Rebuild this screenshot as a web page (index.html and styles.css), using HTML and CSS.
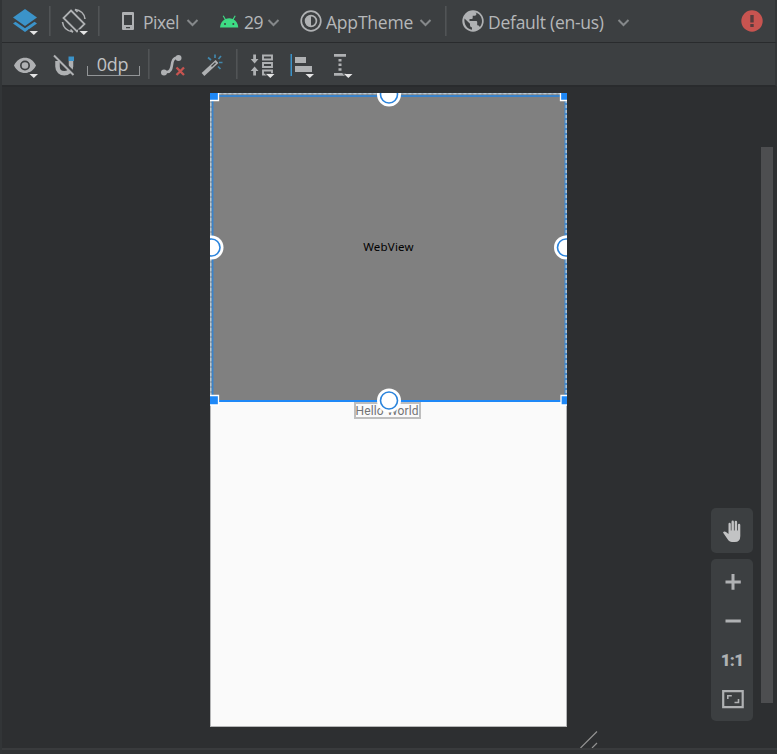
FILE: index.html
```html
<!DOCTYPE html>
<html lang="en">
<head>
<meta charset="utf-8">
<title>Layout Editor</title>
<link rel="stylesheet" href="styles.css">
</head>
<body>
<div class="editor">
  <div class="toolbar toolbar-top">
    <svg class="icon" width="47" height="42" viewBox="2 0 47 42">
      <path fill="#3b93c9" d="M25 9l12 8.500-12 8.500-12-8.500z"/>
      <path fill="#3b93c9" d="M13 23.500l2.500-1.800 9.500 6.600 9.500-6.600 2.500 1.800-12 8.500z"/>
      <path fill="#3c3f41" d="M28 29.500h12v6H30z"/><path fill="#e4e4e4" d="M29.500 31h8.500l-4.200 4z"/>
    </svg>
    <span class="separator"></span>
    <svg class="icon" width="47" height="42" viewBox="51 0 47 42">
      <g fill="none" stroke="#afb1b3" stroke-width="1.600">
        <path d="M71 10.500L84.500 24 77 31.500 63.500 18z" stroke-width="1.800"/>
        <path d="M75 9.500c5.500.7 9.500 4.500 10 9.500M62.500 22c.7 5.300 4.500 9 10.500 10"/>
        <path d="M75 9.500l2.500 2.500M73 32l-2.500-2.500"/>
      </g>
      <path fill="#3c3f41" d="M78 29.500h12v6H78z"/><path fill="#e4e4e4" d="M79.500 31H88l-4.200 4z"/>
    </svg>
    <span class="separator"></span>
    <svg class="icon" width="43" height="42" viewBox="100 0 43 42">
      <path fill="#afb1b3" fill-rule="evenodd" d="M123 12h10q1 0 1 1v16q0 1-1 1h-10q-1 0-1-1V13q0-1 1-1zm1 3v10h8V15zm2 12v1.300h4V27z"/>
    </svg>
    <span class="label pixel">Pixel</span>
    <svg class="icon chevron" width="16" height="42" viewBox="184 0 16 42"><path d="M187.500 20l5 5 5-5"/></svg>
    <svg class="icon" width="44" height="42" viewBox="200 0 44 42">
      <path fill="#3ddc84" d="M220 27.500c.3-4 2.300-6.600 4.700-8l-2-3.500 1-.6 2 3.500c2.300-.8 4.700-.8 7 0l2-3.500 1 .6-2 3.500c2.400 1.400 4.300 4 4.600 8z"/>
      <circle cx="225" cy="24" r="1" fill="#3c3f41"/><circle cx="233.300" cy="24" r="1" fill="#3c3f41"/>
    </svg>
    <span class="label api">29</span>
    <svg class="icon chevron" width="16" height="42" viewBox="265 0 16 42"><path d="M268.500 20l5 5 5-5"/></svg>
    <svg class="icon" width="45" height="42" viewBox="281 0 45 42">
      <g fill="none" stroke="#afb1b3" stroke-width="1.700"><circle cx="311" cy="21" r="9.800"/><circle cx="311" cy="21" r="5.400"/></g>
      <path fill="#afb1b3" d="M311 15.500a5.500 5.500 0 0 0 0 11z"/>
    </svg>
    <span class="label theme">AppTheme</span>
    <svg class="icon chevron" width="28" height="42" viewBox="417 0 28 42"><path d="M420.500 20l5 5 5-5"/></svg>
    <span class="separator"></span>
    <svg class="icon" width="41" height="42" viewBox="447 0 41 42">
      <circle cx="473" cy="21" r="10.700" fill="#afb1b3"/>
      <path fill="#3c3f41" d="M464.500 18.500l5.500 5.200v1.800q0 1.500 2 2v2.200c-5-.5-8.300-5.500-7.500-11.200zM475.500 12.500c4 1 6.500 4.500 6.500 8.500 0 2.300-.8 4.500-2.200 6-.5-1.200-1.300-1.700-2.600-1.700v-3.200q0-1.100-1-1.100h-6.700v-2h2.200q1 0 1-1v-2.200h2q1.800 0 1.800-2z"/>
    </svg>
    <span class="label locale">Default (en-us)</span>
    <svg class="icon chevron" width="24" height="42" viewBox="611 0 24 42"><path d="M618.500 20l5 5 5-5"/></svg>
    <svg class="icon error" width="24" height="42" viewBox="740 0 24 42">
      <circle cx="752" cy="21" r="10.700" fill="#c75450"/>
      <path fill="#573c3d" d="M750.300 15h3.400v7.500h-3.400zM750.300 24h3.400v3h-3.400z"/>
    </svg>
  </div>
  <div class="toolbar toolbar-bottom">
    <svg class="icon" width="84" height="42" viewBox="2 43 84 42">
      <path fill="#afb1b3" fill-rule="evenodd" d="M14 65.500c4.500-10.500 17.500-10.500 22 0-4.500 10-17.500 10-22 0zm11-5a5 5 0 1 0 0 10 5 5 0 0 0 0-10z"/>
      <circle cx="25" cy="65.500" r="3.300" fill="#afb1b3"/>
      <path fill="#3c3f41" d="M28 72.500h12v6H28z"/><path fill="#e4e4e4" d="M29.500 74h8.500l-4.200 4z"/>
      <path fill="none" stroke="#afb1b3" stroke-width="4.500" d="M57.500 61v5.500c0 9 13.500 9 13.500 0V61"/>
      <path fill="#3b93c9" d="M68.500 56.500H74V61h-5.500z"/>
      <path stroke="#3c3f41" stroke-width="3" d="M55.500 54.500l20 20"/>
      <path stroke="#afb1b3" stroke-width="2" d="M54 55.500l19.500 19.500"/>
    </svg>
    <span class="margin-field">0dp</span>
    <span class="separator"></span>
    <svg class="icon" width="86" height="42" viewBox="150 43 86 42">
      <path fill="none" stroke="#afb1b3" stroke-width="2.600" d="M164 72h3c8 0 1.500-14.500 11-14.500"/>
      <g fill="#afb1b3"><circle cx="164" cy="72.500" r="3"/><circle cx="178.500" cy="58" r="3"/></g>
      <path stroke="#c75450" stroke-width="2.300" d="M176.500 67.500l7.500 7.500M184 67.500l-7.500 7.500"/>
      <path stroke="#afb1b3" stroke-width="4" d="M203 74.500l14-13"/>
      <path stroke="#3c3f41" stroke-width="1.300" d="M211.500 66.500l4-3.700"/>
      <path stroke="#4187ad" stroke-width="1.700" fill="none" d="M208 57.500l3 2.500M215 54.500v3.500M221 56l-2.500 3M219 62.500h3.500M218 66.500l2.500 2.500"/>
    </svg>
    <span class="separator"></span>
    <svg class="icon" width="120" height="42" viewBox="238 43 120 42">
      <g fill="#afb1b3"><path d="M253.200 54.500h2.800V59h2.500l-3.900 4.500-3.900-4.500h2.500zM253.200 75.500h2.800V71h2.500l-3.900-4.500-3.900 4.500h2.500z"/>
      <path d="M295 57h11v6h-11zM295 66h17v6h-17zM334 54h12v2.800h-12zM334 73h12v2.800h-12zM338.500 59h3v2.500h-3zM338.500 63.500h3V66h-3zM338.500 68.300h3v2.500h-3z"/></g>
      <path fill="none" stroke="#afb1b3" stroke-width="1.900" d="M263 55.500h9v4H263zM263 63h9v4h-9zM263 70.500h9v4h-9z"/>
      <path fill="#3b93c9" d="M290.500 54h1.500v22h-1.500z"/>
      <path fill="#e4e4e4" stroke="#3c3f41" stroke-width="1.500" paint-order="stroke" d="M266 74h8.500l-4.200 4zM305.500 74h8.500l-4.200 4zM344 74h8.500l-4.200 4z"/>
    </svg>
  </div>
  <div class="surface">
    <div class="device">
      <div class="webview">WebView</div>
      <div class="text-row"><span class="textview">Hello World</span></div>
      <svg class="selection" width="357" height="320" viewBox="210 93 357 320">
        <path fill="none" stroke="#3a83ca" stroke-width="2" d="M212.500 401V96H566"/>
        <path fill="none" stroke="#1e88f7" stroke-width="2" d="M211 401h356"/>
        <path fill="none" stroke="#438bd1" stroke-width="2.500" d="M565.700 94v307"/>
        <path fill="none" stroke="#9dabb6" stroke-width="1.300" d="M210.700 401V93.700H567"/>
        <path fill="none" stroke="#bac8d2" stroke-width="1.300" stroke-dasharray="3 2" d="M210.700 401V93.700H567M566.200 95v306"/>
        <g fill="#1e88f7" stroke="#fff" stroke-width="1.300"><path d="M209 92h9.500v8.500H209zM560.500 92h9v8.500h-9zM209 395.500h9.500v9.500H209zM561 395.500h9v9.500h-9z"/></g>
        <g fill="#fff"><circle cx="389" cy="94.500" r="12"/><circle cx="211.500" cy="247.500" r="12"/><circle cx="566" cy="247.500" r="12"/><circle cx="389" cy="400.500" r="12"/></g>
        <g fill="#fff" stroke="#2b84dc" stroke-width="1.600"><circle cx="389" cy="94.500" r="8.500"/><circle cx="211.500" cy="247.500" r="8.500"/><circle cx="566" cy="247.500" r="8.500"/><circle cx="389" cy="400.500" r="8.500"/></g>
      </svg>
    </div>
    <svg class="resize-grip" width="20" height="20" viewBox="579 728 20 20"><path stroke="#929292" stroke-width="1.200" d="M580.500 748L597 731.500M592 748l5-5"/></svg>
    <div class="zoom-controls">
      <div class="panel pan">
        <svg width="42" height="45" viewBox="711 508 42 45">
          <path fill="#c2c3c4" d="M723 532.500q1-1.500 3-.5l2.500 2V524q0-1.300 1.100-1.300t1.200 1.300v6.500h.7V522q0-1.400 1.200-1.400t1.200 1.400v8.500h.8V522q0-1.200 1.200-1.200t1.200 1.200v8.500h.8V525q0-1.200 1.200-1.200t1.200 1.200v11q0 6-5.500 6h-3q-2 0-3.500-1.800z"/>
        </svg>
      </div>
      <div class="panel zoom">
        <svg width="42" height="78" viewBox="711 563 42 78"><path fill="#afb1b3" d="M725.500 580.500h6v-6.500h3v6.500h6.300v3h-6.300v6.200h-3v-6.200h-6zM725.500 619.500h15.300v3h-15.300z"/></svg>
        <span class="ratio">1:1</span>
        <svg width="42" height="38" viewBox="711 680 42 38"><path fill="none" stroke="#afb1b3" stroke-width="2.200" d="M723.200 691.200h19.500v16h-19.500z"/><path fill="none" stroke="#afb1b3" stroke-width="1.600" d="M727.800 699v-3.300h4M734.500 702.500h4V699"/></svg>
      </div>
    </div>
    <div class="scroll-thumb"></div>
  </div>
  <div class="bottom-edge"></div>
</div>
</body>
</html>
```
FILE: styles.css
```css
* { box-sizing: border-box; }
body { margin: 0; background: #2d2f31; overflow: hidden; }
svg { display: block; flex: none; }
.editor {
  width: 777px;
  height: 754px;
  display: flex;
  flex-direction: column;
  border-left: 2px solid #323537;
  font-family: "Open Sans", "Noto Sans", sans-serif;
}
.toolbar {
  display: flex;
  align-items: flex-start;
  height: 43px;
  flex: none;
  background: #3c3f41;
  border-bottom: 1px solid #292b2d;
  border-right: 2px solid #333638;
}
.toolbar-bottom { height: 44px; border-bottom-width: 2px; }
.separator { width: 2px; height: 30px; margin-top: 6px; flex: none; background: linear-gradient(90deg, #515456 50%, #484b4d 50%); }
.label { flex: none; font-size: 17.500px; line-height: 42px; height: 40px; padding-top: 1px; white-space: nowrap; color: #b5b7b9; }
.pixel { width: 41px; letter-spacing: -.5px; }
.api { width: 21px; letter-spacing: -.5px; }
.theme { width: 91px; letter-spacing: -.2px; }
.locale { width: 123px; letter-spacing: -.26px; }
.chevron path { fill: none; stroke: #85888a; stroke-width: 2; }
.error { margin-left: auto; margin-right: 11px; }
.margin-field {
  width: 53px;
  height: 22px;
  margin: 11px 8px 0 1px;
  padding-right: 2px;
  flex: none;
  color: #c0c2c4;
  font-size: 18px;
  line-height: 20px;
  letter-spacing: -.2px;
  text-align: center;
  background: linear-gradient(#929597, #929597) left bottom / 1px 9px no-repeat, linear-gradient(#929597, #929597) right bottom / 1px 9px no-repeat;
  border-bottom: 1px solid #929597;
}
.surface { position: relative; display: flex; align-items: flex-start; height: 661px; flex: none; background: #2d2f31; }
.device { position: relative; width: 357px; height: 634px; margin: 6px 0 0 208px; flex: none; background: #fafafa; border: 1px solid #b5b6b7; border-top: 0; }
.webview { height: 308px; padding-bottom: 1px; display: flex; align-items: center; justify-content: center; background: #808080; color: #000; font-family: "Noto Sans", sans-serif; font-size: 11.500px; letter-spacing: .2px; }
.text-row { padding: 1px 0 0 143px; }
.textview { display: block; width: 67px; height: 17px; border: 2px solid #bebebe; text-indent: -.5px; color: #737373; font: 12px/14px Roboto, sans-serif; letter-spacing: .15px; white-space: nowrap; }
.selection { position: absolute; left: -1px; top: 0; }
.resize-grip { align-self: flex-end; margin-left: 12px; }
.zoom-controls { display: flex; flex-direction: column; gap: 6px; margin: 421px 0 0 112px; }
.panel { width: 42px; border-radius: 5px; background: #3c3f41; }
.pan { height: 45px; }
.zoom { height: 162px; padding-top: 4px; }
.ratio { display: block; height: 39px; line-height: 39px; text-align: center; color: #afb1b3; font-family: Roboto, sans-serif; font-size: 17px; font-weight: 900; letter-spacing: -.8px; }
.scroll-thumb { width: 12px; height: 556px; margin: 60px 0 0 8px; background: #4d4e50; }
.bottom-edge { flex: 1; border-top: 2px solid #393b3d; background: #313335; }
```
